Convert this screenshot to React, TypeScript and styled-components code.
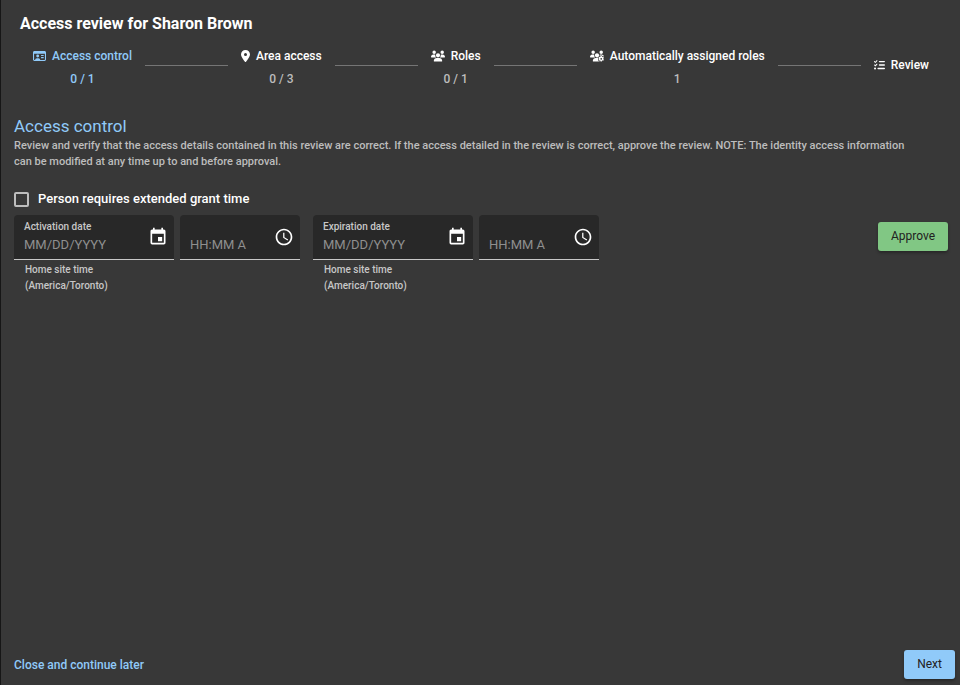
import React, { Fragment } from "react";
import styled, { createGlobalStyle } from "styled-components";
import { FaLocationDot, FaUsers, FaUsersGear, FaListCheck, FaRegIdCard } from "react-icons/fa6";
import { MdEvent, MdAccessTime } from "react-icons/md";

const GlobalStyle = createGlobalStyle`
  *, *::before, *::after { box-sizing: border-box; }
  body {
    margin: 0;
    background: #383838;
    color: #fff;
    font-family: Roboto, "Liberation Sans", sans-serif;
    font-size: 11px;
  }
  button, input { font-family: inherit; }
`;

const Page = styled.div`
  display: flex;
  flex-direction: column;
  min-height: 100vh;
  border-left: 1px solid #161616;
`;

const Title = styled.h1`
  margin: 0;
  padding: 12px 19px 0;
  font-size: 16px;
  line-height: 24px;
  font-weight: 700;
`;

const Stepper = styled.ol`
  display: flex;
  align-items: center;
  list-style: none;
  margin: 0;
  padding: 9px 18px 0 19px;
`;

const Step = styled.li<{ $active?: boolean }>`
  flex: none;
  padding: 0 13px;
  text-align: center;
  font-size: 12px;
  font-weight: 500;
  color: ${(p) => (p.$active ? "#90caf9" : "#fff")};
`;

const StepLabel = styled.div<{ $iconWidth: number }>`
  display: flex;
  align-items: center;
  gap: 6px;
  line-height: 22px;

  svg {
    width: ${(p) => p.$iconWidth}px;
    height: 12px;
  }
`;

const StepCount = styled.div<{ $active?: boolean }>`
  margin-top: 6px;
  line-height: 12px;
  color: ${(p) => (p.$active ? "#90caf9" : "#bdbdbd")};
`;

const Connector = styled.li`
  flex: 1;
  height: 1px;
  background: #757575;
`;

const Content = styled.main`
  flex: 1;
  padding: 31px 12px 0 13px;
`;

const Heading = styled.h2`
  margin: 0;
  font-size: 17px;
  line-height: 20px;
  font-weight: 400;
  color: #90caf9;
`;

const Description = styled.p`
  margin: 0;
  padding: 2px 28px 0 0;
  line-height: 16px;
  font-weight: 500;
  color: #bdbdbd;
`;

const CheckLabel = styled.label`
  display: flex;
  align-items: center;
  gap: 9px;
  width: fit-content;
  margin-top: 19px;
  font-size: 13px;
  line-height: 20px;
  font-weight: 500;
`;

const Checkbox = styled.input`
  appearance: none;
  width: 15px;
  height: 15px;
  margin: 0;
  border: 2px solid #bdbdbd;
  border-radius: 2px;

  &:checked { background: #90caf9; }
`;

const FormRow = styled.div`
  display: flex;
  align-items: flex-start;
  justify-content: space-between;
  margin-top: 6px;
`;

const Fields = styled.div`
  display: flex;
  gap: 13px;
`;

const Pair = styled.div`
  display: flex;
  align-items: flex-start;
  gap: 6px;
`;

const Field = styled.div<{ $width: number }>`
  display: flex;
  align-items: center;
  width: ${(p) => p.$width}px;
  height: 45px;
  padding: 0 6px 0 10px;
  background: #282828;
  border-bottom: 1px solid #c7c7c7;
  border-radius: 4px 4px 0 0;
`;

const FieldText = styled.div`
  flex: 1;
  min-width: 0;
  padding-bottom: 2px;
`;

const FieldLabel = styled.label`
  display: block;
  height: 16px;
  font-size: 10px;
  line-height: 16px;
  font-weight: 500;
  color: #c7c7c7;
`;

const FieldInput = styled.input`
  display: block;
  width: 100%;
  height: 18px;
  padding: 0;
  border: 0;
  outline: 0;
  background: none;
  color: #fff;
  font-size: 13px;
  font-weight: 400;

  &::placeholder { color: #8f8f8f; opacity: 1; }
`;

const IconButton = styled.button`
  display: flex;
  padding: 0;
  border: 0;
  background: none;
  color: #fff;
  cursor: pointer;

  svg {
    width: 20px;
    height: 20px;
  }
`;

const Helper = styled.div`
  padding: 2px 11px 0;
  font-size: 10px;
  line-height: 16px;
  font-weight: 500;
  color: #c7c7c7;
`;

const ActionButton = styled.button<{ $tone: string }>`
  height: 29px;
  padding: 0 13px 2px;
  border: 0;
  border-radius: 3px;
  background: ${(p) => p.$tone};
  color: #212121;
  font-size: 12px;
  line-height: 20px;
  font-weight: 400;
  box-shadow: 0 2px 3px rgba(0, 0, 0, 0.3);
  cursor: pointer;
`;

const ApproveSlot = styled.div`
  padding-top: 7px;
`;

const Footer = styled.footer`
  display: flex;
  align-items: center;
  justify-content: space-between;
  padding: 0 5px 6px 13px;
`;

const FooterLink = styled.a`
  font-size: 12px;
  font-weight: 500;
  line-height: 16px;
  color: #90caf9;
  text-decoration: none;
`;

const steps = [
  { label: "Access control", count: "0 / 1", Icon: FaRegIdCard, iconWidth: 13 },
  { label: "Area access", count: "0 / 3", Icon: FaLocationDot, iconWidth: 9 },
  { label: "Roles", count: "0 / 1", Icon: FaUsers, iconWidth: 14 },
  { label: "Automatically assigned roles", count: "1", Icon: FaUsersGear, iconWidth: 14 },
  { label: "Review", count: "", Icon: FaListCheck, iconWidth: 11 },
];

function DateTimeFields({ id, label }: { id: string; label: string }) {
  return (
    <Pair>
      <div>
        <Field $width={160}>
          <FieldText>
            <FieldLabel htmlFor={`${id}-date`}>{label}</FieldLabel>
            <FieldInput id={`${id}-date`} placeholder="MM/DD/YYYY" />
          </FieldText>
          <IconButton type="button" aria-label={`Choose ${label.toLowerCase()}`}>
            <MdEvent />
          </IconButton>
        </Field>
        <Helper>
          Home site time
          <br />
          (America/Toronto)
        </Helper>
      </div>
      <Field $width={120}>
        <FieldText>
          <FieldLabel htmlFor={`${id}-time`} aria-label={`${label} time`} />
          <FieldInput id={`${id}-time`} placeholder="HH:MM A" />
        </FieldText>
        <IconButton type="button" aria-label={`Choose ${label.toLowerCase()} time`}>
          <MdAccessTime />
        </IconButton>
      </Field>
    </Pair>
  );
}

export default function App() {
  return (
    <>
      <GlobalStyle />
      <Page>
        <Title>Access review for Sharon Brown</Title>
        <Stepper>
          {steps.map(({ label, count, Icon, iconWidth }, i) => (
            <Fragment key={label}>
              {i > 0 && <Connector aria-hidden="true" />}
              <Step $active={i === 0}>
                <StepLabel $iconWidth={iconWidth}>
                  <Icon />
                  {label}
                </StepLabel>
                {count && <StepCount $active={i === 0}>{count}</StepCount>}
              </Step>
            </Fragment>
          ))}
        </Stepper>
        <Content>
          <Heading>Access control</Heading>
          <Description>
            Review and verify that the access details contained in this review are correct. If the access detailed in
            the review is correct, approve the review. NOTE: The identity access information can be modified at any
            time up to and before approval.
          </Description>
          <CheckLabel>
            <Checkbox type="checkbox" />
            Person requires extended grant time
          </CheckLabel>
          <FormRow>
            <Fields>
              <DateTimeFields id="activation" label="Activation date" />
              <DateTimeFields id="expiration" label="Expiration date" />
            </Fields>
            <ApproveSlot>
              <ActionButton type="button" $tone="#81c784">Approve</ActionButton>
            </ApproveSlot>
          </FormRow>
        </Content>
        <Footer>
          <FooterLink href="#later">Close and continue later</FooterLink>
          <ActionButton type="button" $tone="#90caf9">Next</ActionButton>
        </Footer>
      </Page>
    </>
  );
}
